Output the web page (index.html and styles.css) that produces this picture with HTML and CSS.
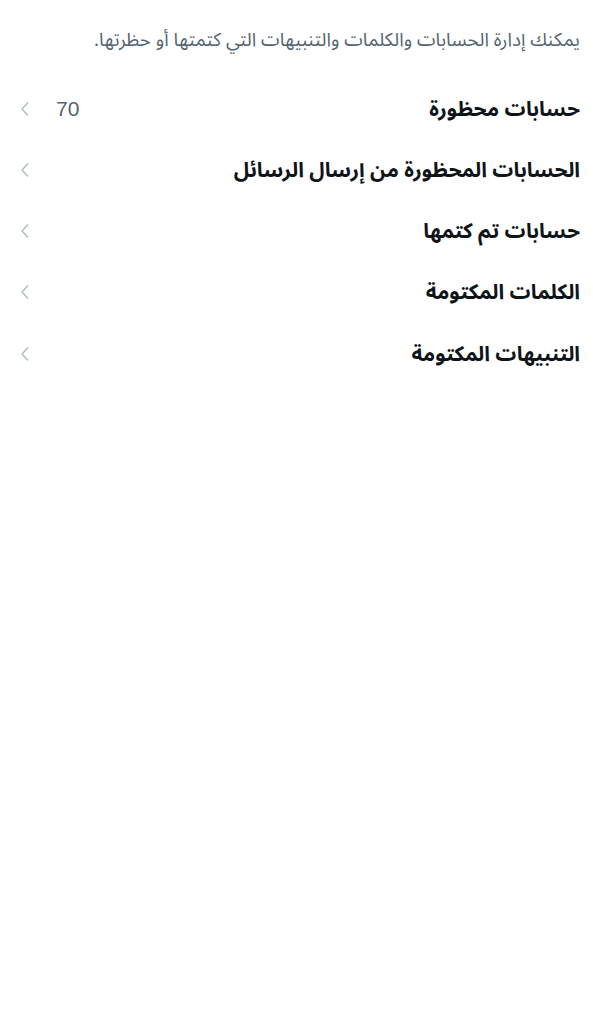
FILE: index.html
```html
<!DOCTYPE html>
<html lang="ar" dir="rtl">
<head>
  <meta charset="UTF-8">
  <meta name="viewport" content="width=device-width, initial-scale=1.0">
  <title>الكتم والحظر</title>
  <link rel="stylesheet" href="styles.css">
</head>
<body>
  <p class="intro">يمكنك إدارة الحسابات والكلمات والتنبيهات التي كتمتها أو حظرتها.</p>

  <ul class="menu">
    <li class="row">
      <span class="label">حسابات محظورة</span>
      <span class="count">70</span>
      <svg class="chev" viewBox="0 0 10 16"><path d="M8 1.5 L2 8 L8 14.5"/></svg>
    </li>
    <li class="row">
      <span class="label">الحسابات المحظورة من إرسال الرسائل</span>
      <svg class="chev" viewBox="0 0 10 16"><path d="M8 1.5 L2 8 L8 14.5"/></svg>
    </li>
    <li class="row">
      <span class="label">حسابات تم كتمها</span>
      <svg class="chev" viewBox="0 0 10 16"><path d="M8 1.5 L2 8 L8 14.5"/></svg>
    </li>
    <li class="row">
      <span class="label">الكلمات المكتومة</span>
      <svg class="chev" viewBox="0 0 10 16"><path d="M8 1.5 L2 8 L8 14.5"/></svg>
    </li>
    <li class="row">
      <span class="label">التنبيهات المكتومة</span>
      <svg class="chev" viewBox="0 0 10 16"><path d="M8 1.5 L2 8 L8 14.5"/></svg>
    </li>
  </ul>
</body>
</html>
```

FILE: styles.css
```css
body {
  margin: 0;
  padding: 0;
  background: #fff;
  font-family: "Noto Sans Arabic", "Noto Sans", "DejaVu Sans", sans-serif;
  color: #0f1419;
}

.intro {
  margin: 0;
  padding: 26px 13px 0 16px;
  font-size: 18.8px;
  line-height: 28px;
  color: #536471;
}

.menu {
  list-style: none;
  margin: 0;
  padding: 24px 0 0 0;
}

.row {
  display: flex;
  align-items: center;
  height: 61.25px;
  padding: 0 13px 0 20px;
}

.label {
  flex: 1;
  font-size: 20.8px;
  font-weight: bold;
  line-height: 30px;
}

.count {
  font-family: "Liberation Sans", Arial, sans-serif;
  font-size: 21px;
  color: #536471;
  margin-left: 26px;
}

.chev {
  width: 10px;
  height: 16px;
  fill: none;
  stroke: #aab8c2;
  stroke-width: 1.3;
}
```
